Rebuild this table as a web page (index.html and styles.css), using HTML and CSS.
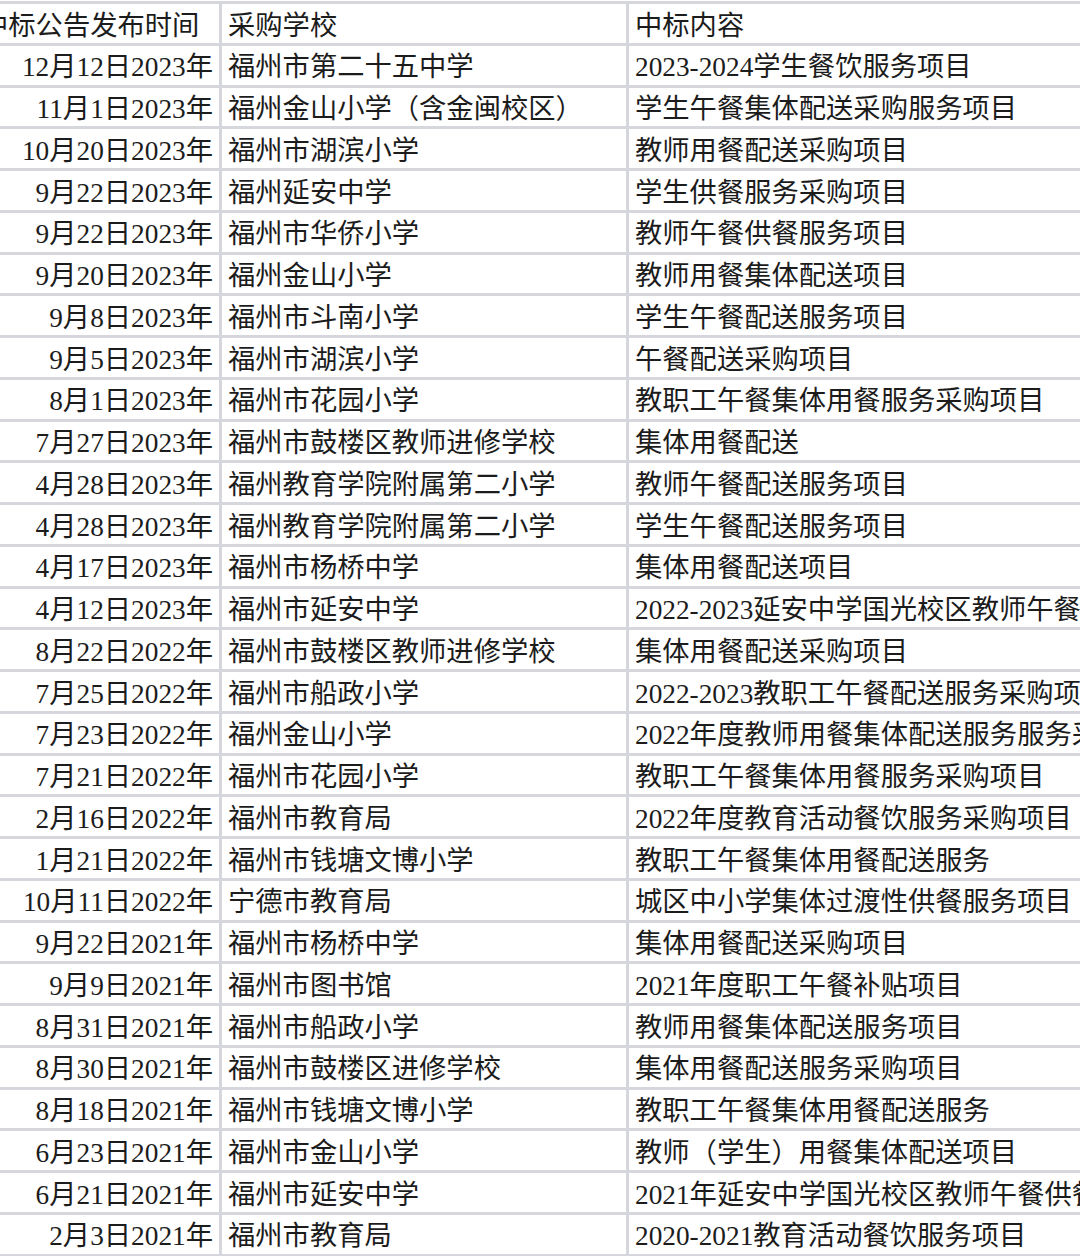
FILE: index.html
```html
<!DOCTYPE html>
<html lang="zh-CN">
<head>
<meta charset="utf-8">
<title>中标公告</title>
<link rel="stylesheet" href="styles.css">
</head>
<body>
<div class="sheet">
  <div class="cell head">中标公告发布时间</div><div class="cell">采购学校</div><div class="cell">中标内容</div>
  <div class="cell date">12月12日2023年</div><div class="cell">福州市第二十五中学</div><div class="cell">2023-2024学生餐饮服务项目</div>
  <div class="cell date">11月1日2023年</div><div class="cell">福州金山小学（含金闽校区）</div><div class="cell">学生午餐集体配送采购服务项目</div>
  <div class="cell date">10月20日2023年</div><div class="cell">福州市湖滨小学</div><div class="cell">教师用餐配送采购项目</div>
  <div class="cell date">9月22日2023年</div><div class="cell">福州延安中学</div><div class="cell">学生供餐服务采购项目</div>
  <div class="cell date">9月22日2023年</div><div class="cell">福州市华侨小学</div><div class="cell">教师午餐供餐服务项目</div>
  <div class="cell date">9月20日2023年</div><div class="cell">福州金山小学</div><div class="cell">教师用餐集体配送项目</div>
  <div class="cell date">9月8日2023年</div><div class="cell">福州市斗南小学</div><div class="cell">学生午餐配送服务项目</div>
  <div class="cell date">9月5日2023年</div><div class="cell">福州市湖滨小学</div><div class="cell">午餐配送采购项目</div>
  <div class="cell date">8月1日2023年</div><div class="cell">福州市花园小学</div><div class="cell">教职工午餐集体用餐服务采购项目</div>
  <div class="cell date">7月27日2023年</div><div class="cell">福州市鼓楼区教师进修学校</div><div class="cell">集体用餐配送</div>
  <div class="cell date">4月28日2023年</div><div class="cell">福州教育学院附属第二小学</div><div class="cell">教师午餐配送服务项目</div>
  <div class="cell date">4月28日2023年</div><div class="cell">福州教育学院附属第二小学</div><div class="cell">学生午餐配送服务项目</div>
  <div class="cell date">4月17日2023年</div><div class="cell">福州市杨桥中学</div><div class="cell">集体用餐配送项目</div>
  <div class="cell date">4月12日2023年</div><div class="cell">福州市延安中学</div><div class="cell">2022-2023延安中学国光校区教师午餐供餐服务项目</div>
  <div class="cell date">8月22日2022年</div><div class="cell">福州市鼓楼区教师进修学校</div><div class="cell">集体用餐配送采购项目</div>
  <div class="cell date">7月25日2022年</div><div class="cell">福州市船政小学</div><div class="cell">2022-2023教职工午餐配送服务采购项目</div>
  <div class="cell date">7月23日2022年</div><div class="cell">福州金山小学</div><div class="cell">2022年度教师用餐集体配送服务服务采购项目</div>
  <div class="cell date">7月21日2022年</div><div class="cell">福州市花园小学</div><div class="cell">教职工午餐集体用餐服务采购项目</div>
  <div class="cell date">2月16日2022年</div><div class="cell">福州市教育局</div><div class="cell">2022年度教育活动餐饮服务采购项目</div>
  <div class="cell date">1月21日2022年</div><div class="cell">福州市钱塘文博小学</div><div class="cell">教职工午餐集体用餐配送服务</div>
  <div class="cell date">10月11日2022年</div><div class="cell">宁德市教育局</div><div class="cell">城区中小学集体过渡性供餐服务项目</div>
  <div class="cell date">9月22日2021年</div><div class="cell">福州市杨桥中学</div><div class="cell">集体用餐配送采购项目</div>
  <div class="cell date">9月9日2021年</div><div class="cell">福州市图书馆</div><div class="cell">2021年度职工午餐补贴项目</div>
  <div class="cell date">8月31日2021年</div><div class="cell">福州市船政小学</div><div class="cell">教师用餐集体配送服务项目</div>
  <div class="cell date">8月30日2021年</div><div class="cell">福州市鼓楼区进修学校</div><div class="cell">集体用餐配送服务采购项目</div>
  <div class="cell date">8月18日2021年</div><div class="cell">福州市钱塘文博小学</div><div class="cell">教职工午餐集体用餐配送服务</div>
  <div class="cell date">6月23日2021年</div><div class="cell">福州市金山小学</div><div class="cell">教师（学生）用餐集体配送项目</div>
  <div class="cell date">6月21日2021年</div><div class="cell">福州市延安中学</div><div class="cell">2021年延安中学国光校区教师午餐供餐服务项目</div>
  <div class="cell date">2月3日2021年</div><div class="cell">福州市教育局</div><div class="cell">2020-2021教育活动餐饮服务项目</div>
</div>
</body>
</html>
```

FILE: styles.css
```css
html, body {
  margin: 0;
  padding: 0;
  background: #ffffff;
  overflow: hidden;
  width: 1080px;
  height: 1256px;
}

.sheet {
  display: grid;
  grid-template-columns: 244px 404px 700px;
  grid-auto-rows: 38.75px;
  gap: 3px;
  padding: 3px;
  margin: 1px 0 0 -28px;
  width: max-content;
  background: #d6d6dd;
  font-family: "Liberation Serif", "Noto Sans CJK SC", serif;
  font-size: 27.3px;
  color: #1c1c1c;
}

.cell {
  background: #ffffff;
  display: flex;
  align-items: center;
  padding: 6px 6px 0;
  white-space: nowrap;
  overflow: hidden;
  line-height: 1;
}

.date {
  justify-content: flex-end;
}

.head {
  justify-content: flex-start;
}
```
